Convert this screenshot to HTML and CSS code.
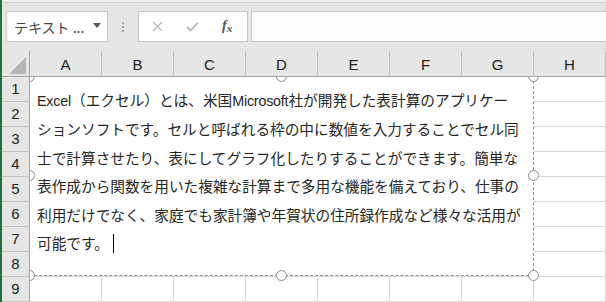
FILE: index.html
```html
<!DOCTYPE html>
<html lang="ja">
<head>
<meta charset="utf-8">
<title>Excel</title>
<link rel="stylesheet" href="styles.css">
</head>
<body>
<div class="app">
  <div class="topband"></div>
  <div class="fbar">
    <div class="namebox">
      <span class="nb-text">テキスト ...</span>
      <svg class="nb-arrow" width="8" height="5" viewBox="0 0 8 5"><path d="M0 0H8L4 5Z" fill="#5a5a5a"/></svg>
    </div>
    <div class="grip"><i></i><i></i><i></i></div>
    <div class="fbtns">
      <svg class="btn-x" width="11" height="11" viewBox="0 0 11 11"><path d="M1 1L10 10M10 1L1 10" stroke="#b8b8b8" stroke-width="1.4" fill="none"/></svg>
      <svg class="btn-ok" width="13" height="11" viewBox="0 0 13 11"><path d="M1 6L4.5 9.5L12 1.5" stroke="#b8b8b8" stroke-width="1.8" fill="none"/></svg>
      <span class="fx">f<span class="fx-x">x</span></span>
    </div>
    <div class="finput"></div>
  </div>
  <div class="sheet">
    <div class="corner">
      <svg width="18" height="17" viewBox="0 0 18 17"><path d="M17 0V17H0Z" fill="#b5b5b5"/></svg>
    </div>
    <div class="colheads">
      <div class="ch">A</div><div class="ch">B</div><div class="ch">C</div><div class="ch">D</div>
      <div class="ch">E</div><div class="ch">F</div><div class="ch">G</div><div class="ch">H</div>
    </div>
    <div class="rowheads">
      <div class="rh">1</div><div class="rh">2</div><div class="rh">3</div>
      <div class="rh">4</div><div class="rh">5</div><div class="rh">6</div>
      <div class="rh">7</div><div class="rh">8</div><div class="rh">9</div>
    </div>
    <div class="cells">
      <div class="textbox">
        <p class="tb-text"><span class="latin">Excel</span>（エクセル）とは、米国<span class="latin">Microsoft</span>社が開発した表計算のアプリケー<br>ションソフトです。セルと呼ばれる枠の中に数値を入力することでセル同<br>士で計算させたり、表にしてグラフ化したりすることができます。簡単な<br>表作成から関数を用いた複雑な計算まで多用な機能を備えており、仕事の<br>利用だけでなく、家庭でも家計簿や年賀状の住所録作成など様々な活用が<br>可能です。<span class="caret"></span></p>
      </div>
      <span class="handle h-tl"></span>
      <span class="handle h-tm"></span>
      <span class="handle h-tr"></span>
      <span class="handle h-ml"></span>
      <span class="handle h-mr"></span>
      <span class="handle h-bl"></span>
      <span class="handle h-bm"></span>
      <span class="handle h-br"></span>
    </div>
  </div>
</div>
</body>
</html>
```

FILE: styles.css
```css
html, body {
  margin: 0;
  padding: 0;
}
body {
  width: 606px;
  height: 302px;
  overflow: hidden;
  background: #e6e6e6;
  font-family: "Noto Sans CJK JP", "Noto Sans", sans-serif;
}
.app {
  box-sizing: border-box;
  height: 302px;
  border-left: 2px solid #217346;
  display: flex;
  flex-direction: column;
}
.topband {
  height: 11px;
  flex: none;
  background: linear-gradient(to bottom, #f1f1f1 0, #f1f1f1 2px, #d6d6d6 2px, #d6d6d6 3px, #e6e6e6 3px);
}

/* formula bar */
.fbar {
  height: 31px;
  flex: none;
  display: flex;
  padding-left: 4px;
  margin-bottom: 9px;
}
.namebox {
  box-sizing: border-box;
  width: 102px;
  height: 31px;
  border: 1px solid #c6c6c6;
  background: #fff;
  display: flex;
  align-items: center;
  padding-left: 7px;
}
.nb-text {
  font-size: 14px;
  color: #444;
  white-space: pre;
  flex: 1;
}
.nb-arrow {
  margin-right: 6px;
  margin-top: -2px;
}
.grip {
  width: 30px;
  display: flex;
  flex-direction: column;
  align-items: center;
  justify-content: center;
  gap: 2px;
}
.grip i {
  display: block;
  width: 2px;
  height: 2px;
  background: #a9a9a9;
}
.fbtns {
  box-sizing: border-box;
  width: 110px;
  height: 31px;
  border: 1px solid #c6c6c6;
  background: #fff;
  display: flex;
  align-items: center;
  padding-left: 13px;
}
.btn-x {
  margin-right: 23px;
}
.btn-ok {
  margin-right: 23px;
}
.fx {
  font-family: "Liberation Serif", serif;
  font-style: italic;
  font-weight: bold;
  font-size: 14px;
  color: #555;
  margin-top: -2px;
}
.fx-x {
  font-size: 11px;
  position: relative;
  top: 2px;
}
.finput {
  flex: 1;
  box-sizing: border-box;
  height: 31px;
  margin-left: 3px;
  border: 1px solid #c6c6c6;
  border-right: none;
  background: #fdfdfd;
}

/* sheet */
.sheet {
  display: grid;
  grid-template-columns: 28px 576px;
  grid-template-rows: 26px 225px;
}
.corner {
  box-sizing: border-box;
  border-right: 1px solid #a6a6a6;
  border-bottom: 1px solid #a6a6a6;
  display: flex;
  align-items: flex-end;
  justify-content: flex-end;
  padding: 0 2px 2px 0;
}
.colheads {
  display: flex;
}
.ch {
  box-sizing: border-box;
  width: 72px;
  height: 26px;
  border-right: 1px solid #bcbcbc;
  border-bottom: 1px solid #a6a6a6;
  text-align: center;
  line-height: 25px;
  font-family: "Liberation Sans", sans-serif;
  font-size: 15px;
  color: #222;
  padding-top: 1px;
}
.rowheads {
  display: flex;
  flex-direction: column;
}
.rh {
  box-sizing: border-box;
  height: 25px;
  border-right: 1px solid #a6a6a6;
  border-bottom: 1px solid #c4c4c4;
  text-align: center;
  line-height: 24px;
  font-family: "Liberation Sans", sans-serif;
  font-size: 15px;
  color: #222;
}
.cells {
  position: relative;
  overflow: hidden;
  background-color: #fff;
  background-image:
    linear-gradient(to right, transparent 71px, #d6d6d6 71px),
    linear-gradient(to bottom, transparent 24px, #d6d6d6 24px);
  background-size: 72px 25px;
}
.textbox {
  position: absolute;
  left: -1px;
  top: -1px;
  box-sizing: border-box;
  width: 505px;
  height: 200px;
  border: 1px dashed #8e8e8e;
  background: #fff;
  padding: 9px 0 0 7px;
}
.tb-text {
  margin: 0;
  font-size: 14.67px;
  line-height: 28.4px;
  color: #262626;
  white-space: nowrap;
}
.latin {
  font-family: "Liberation Sans", sans-serif;
  font-size: 14.3px;
  letter-spacing: -0.2px;
}
.caret {
  display: inline-block;
  width: 1px;
  height: 19px;
  background: #000;
  margin-left: 4px;
  vertical-align: -4px;
}
.handle {
  position: absolute;
  width: 11px;
  height: 11px;
  box-sizing: border-box;
  border: 1.6px solid #8c8c8c;
  border-radius: 50%;
  background: #fff;
  margin: -5.5px 0 0 -5.5px;
}
.h-tl { left: -1px; top: -1px; }
.h-tm { left: 251px; top: -1px; }
.h-tr { left: 503px; top: -1px; }
.h-ml { left: -1px; top: 98.5px; }
.h-mr { left: 503px; top: 98.5px; }
.h-bl { left: -1px; top: 198px; }
.h-bm { left: 251px; top: 198px; }
.h-br { left: 503px; top: 198px; }
```
